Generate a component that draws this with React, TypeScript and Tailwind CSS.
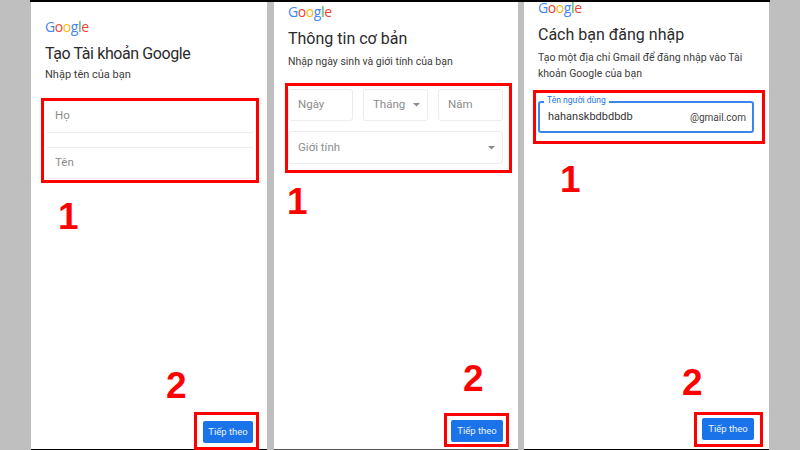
const GoogleLogo = () => (
  <div className="font-['Open_Sans',sans-serif] text-[14px] leading-[14px] tracking-[-0.4px]">
    <span className="text-[#4285f4]">G</span>
    <span className="text-[#ea4335]">o</span>
    <span className="text-[#fbbc05]">o</span>
    <span className="text-[#4285f4]">g</span>
    <span className="text-[#34a853]">l</span>
    <span className="text-[#ea4335]">e</span>
  </div>
);

const Caret = () => (
  <svg width="7" height="4" viewBox="0 0 7 4" className="shrink-0">
    <path d="M0 0h7L3.5 3.5z" fill="#8a8a8a" />
  </svg>
);

const Field = ({ label, caret, className }: { label: string; caret?: boolean; className: string }) => (
  <div className={`flex items-center justify-between rounded-[3px] border border-[#ececec] text-[11.5px] text-[#8c8c8c] ${className}`}>
    <span>{label}</span>
    {caret && <Caret />}
  </div>
);

const NextButton = ({ className }: { className: string }) => (
  <button className={`flex h-[22px] items-center justify-center self-end rounded-[2px] bg-[#1a73e8] text-[9.5px] text-[#eef4ff] ${className}`}>
    Tiếp theo
  </button>
);

// red box and number drawn on top of the screenshot
const RedBox = ({ className }: { className: string }) => (
  <div className={`absolute border-[3px] border-[#ff0000] ${className}`} />
);

const Mark = ({ value, className }: { value: string; className: string }) => (
  <span className={`absolute font-['Liberation_Sans',sans-serif] text-[37px] font-bold leading-none text-[#ff0000] ${className}`}>
    {value}
  </span>
);

export default function App() {
  return (
    <div className="h-[450px] w-[800px] overflow-hidden bg-[#bfbfbf] font-['Roboto',sans-serif]">
      <div className="ml-[30px] flex h-[450px] w-[740px] border-t-2 border-black">
        {/* Panel 1 */}
        <section className="relative ml-[1px] flex w-[236px] flex-col border-b border-black bg-white pb-[6px] pl-[14px] pr-[14px] pt-[18px]">
          <GoogleLogo />
          <h2 className="mt-[8px] text-[16px] leading-[24px] tracking-[-0.4px] text-[#2b2b2b]">Tạo Tài khoản Google</h2>
          <p className="mt-[2px] text-[11px] leading-[14px] text-[#3c3c3c]">Nhập tên của bạn</p>
          <div className="ml-[1px] mt-[18px] flex w-[208px] flex-col gap-[14px]">
            <Field label="Họ" className="h-[33px] border-x-0 border-t-0 pl-[9px]" />
            <Field label="Tên" className="h-[32px] border-x-0 pl-[9px]" />
          </div>
          <NextButton className="mt-auto w-[50px]" />
          <RedBox className="left-[10px] top-[96px] h-[85px] w-[218px]" />
          <Mark value="1" className="left-[27px] top-[196px]" />
          <Mark value="2" className="left-[135px] top-[365px]" />
          <RedBox className="left-[163px] top-[410px] h-[38px] w-[65px]" />
        </section>

        {/* Panel 2 */}
        <section className="relative ml-[7px] flex w-[244px] flex-col border-b border-[#555] bg-white pb-[7px] pl-[14px] pr-[15px] pt-[3px]">
          <GoogleLogo />
          <h2 className="mt-[8px] text-[16px] leading-[24px] text-[#2b2b2b]">Thông tin cơ bản</h2>
          <p className="mt-[4px] text-[10.5px] leading-[14px] text-[#3c3c3c]">Nhập ngày sinh và giới tính của bạn</p>
          <div className="mt-[20px] flex gap-[10px]">
            <Field label="Ngày" className="h-[32px] w-[65px] pl-[9px]" />
            <Field label="Tháng" caret className="h-[32px] w-[65px] pl-[9px] pr-[7px]" />
            <Field label="Năm" className="h-[32px] w-[65px] pl-[9px]" />
          </div>
          <Field label="Giới tính" caret className="mt-[10px] h-[33px] w-[215px] pl-[9px] pr-[7px]" />
          <NextButton className="mt-auto w-[52px]" />
          <RedBox className="left-[11px] top-[81px] h-[90px] w-[227px]" />
          <Mark value="1" className="left-[13px] top-[181px]" />
          <Mark value="2" className="left-[189px] top-[358px]" />
          <RedBox className="left-[170px] top-[411px] h-[34px] w-[65px]" />
        </section>

        {/* Panel 3 */}
        <section className="relative ml-[6px] flex w-[245px] flex-col border-b border-black bg-white pb-[9px] pl-[14px] pr-[15px] pt-0">
          <div className="-mt-[1px]">
            <GoogleLogo />
          </div>
          <h2 className="mt-[8px] text-[16px] leading-[24px] text-[#2b2b2b]">Cách bạn đăng nhập</h2>
          <p className="mt-[3px] w-[215px] text-[10.5px] leading-[16px] text-[#3c3c3c]">
            Tạo một địa chỉ Gmail để đăng nhập vào Tài khoản Google của bạn
          </p>
          <div className="relative mt-[19px] flex h-[32px] w-[216px] items-center justify-between rounded-[3px] border-2 border-[#3b86ea] pl-[8px] pr-[6px]">
            <span className="text-[11px] text-[#333]">hahanskbdbdbdb</span>
            <span className="text-[10px] text-[#444]">@gmail.com</span>
            <span className="absolute -top-[8px] left-[4px] bg-white px-[3px] text-[8.5px] leading-[10px] text-[#1a73e8]">Tên người dùng</span>
          </div>
          <NextButton className="mt-auto w-[52px]" />
          <RedBox className="left-[9px] top-[88px] h-[54px] w-[232px]" />
          <Mark value="1" className="left-[36px] top-[159px]" />
          <Mark value="2" className="left-[158px] top-[362px]" />
          <RedBox className="left-[170px] top-[410px] h-[35px] w-[69px]" />
        </section>
      </div>
    </div>
  );
}
